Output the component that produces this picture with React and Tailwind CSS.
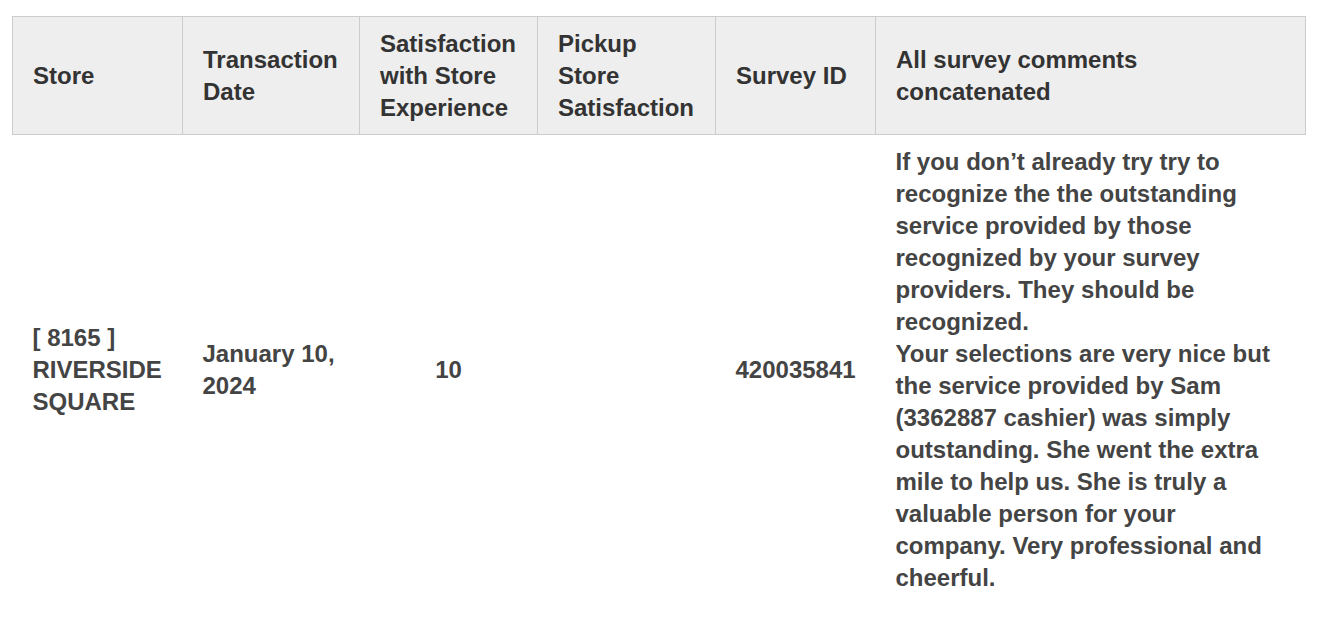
import React from "react";

const headers = [
  { label: "Store", w: "w-[170px]" },
  { label: "Transaction Date", w: "w-[177px]" },
  { label: "Satisfaction with Store Experience", w: "w-[178px]" },
  { label: "Pickup Store Satisfaction", w: "w-[178px]" },
  { label: "Survey ID", w: "w-[160px]" },
  { label: "All survey comments concatenated", w: "w-[430px]" },
];

const App = () => {
  return (
    <div className="min-h-screen bg-white pl-[12px] pt-[16px] font-['Liberation_Sans',Arial,sans-serif]">
      <table className="w-[1293px] table-fixed border-collapse text-left text-[24px] font-bold leading-[32px]">
        <thead className="bg-[#eeeeee] text-[#333333]">
          <tr>
            {headers.map((h) => (
              <th
                key={h.label}
                className={`${h.w} border border-[#cccccc] px-[20px] pt-[11px] pb-[10px] align-middle font-bold`}
              >
                {h.label}
              </th>
            ))}
          </tr>
        </thead>
        <tbody className="text-[#444444]">
          <tr>
            <td className="px-[20px] py-[11px] align-middle">
              [ 8165 ] RIVERSIDE SQUARE
            </td>
            <td className="px-[20px] py-[11px] align-middle">January 10, 2024</td>
            <td className="px-[20px] py-[11px] text-center align-middle">10</td>
            <td className="px-[20px] py-[11px] align-middle"></td>
            <td className="px-[20px] py-[11px] align-middle">420035841</td>
            <td className="px-[20px] py-[11px] align-middle">
              If you don’t already try try to recognize the the outstanding service provided by
              those recognized by your survey providers. They should be recognized.
              <br />
              Your selections are very nice but the service provided by Sam (3362887 cashier) was
              simply outstanding. She went the extra mile to help us. She is truly a valuable person
              for your company. Very professional and cheerful.
            </td>
          </tr>
        </tbody>
      </table>
    </div>
  );
};

export default App;
